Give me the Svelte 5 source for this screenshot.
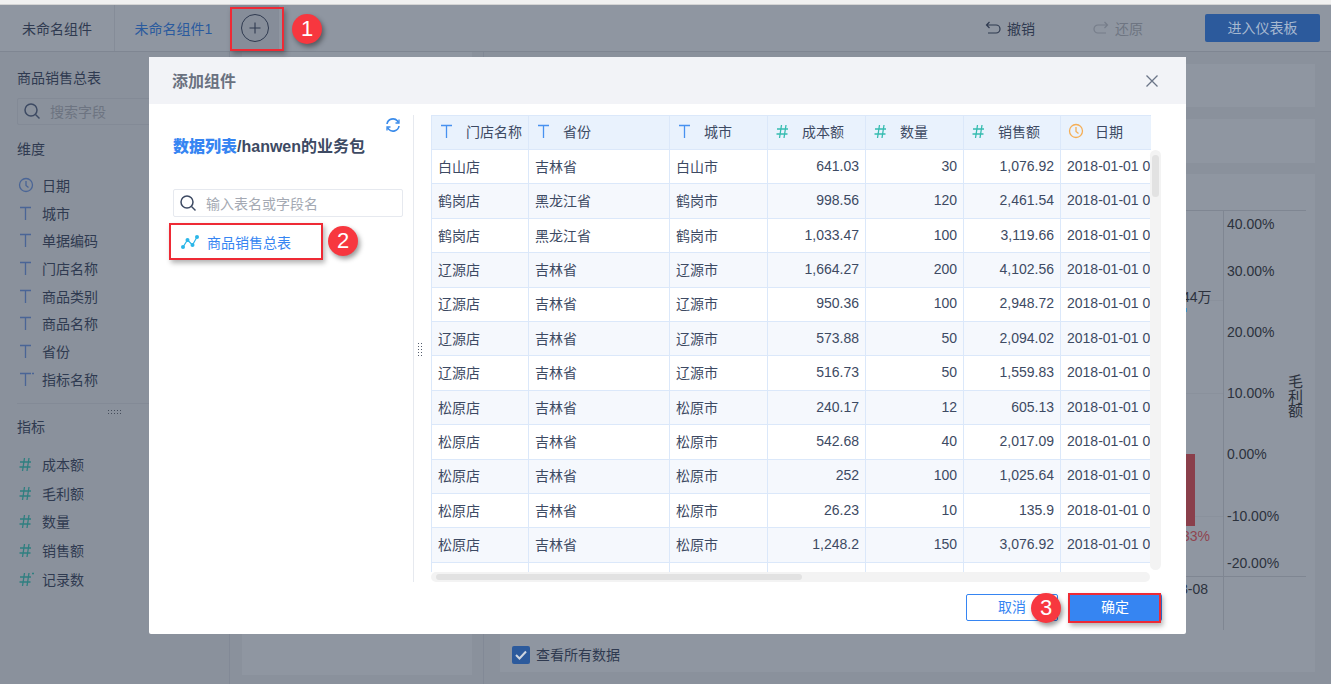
<script>
  const cols = [
    { label: '门店名称', icon: 'T', w: 97 },
    { label: '省份', icon: 'T', w: 141 },
    { label: '城市', icon: 'T', w: 98 },
    { label: '成本额', icon: 'H', w: 98 },
    { label: '数量', icon: 'H', w: 98 },
    { label: '销售额', icon: 'H', w: 97 },
    { label: '日期', icon: 'C', w: 90 }
  ];
  const d = '2018-01-01 00:00:00';
  const rows = [
    ['白山店','吉林省','白山市','641.03','30','1,076.92',d],
    ['鹤岗店','黑龙江省','鹤岗市','998.56','120','2,461.54',d],
    ['鹤岗店','黑龙江省','鹤岗市','1,033.47','100','3,119.66',d],
    ['辽源店','吉林省','辽源市','1,664.27','200','4,102.56',d],
    ['辽源店','吉林省','辽源市','950.36','100','2,948.72',d],
    ['辽源店','吉林省','辽源市','573.88','50','2,094.02',d],
    ['辽源店','吉林省','辽源市','516.73','50','1,559.83',d],
    ['松原店','吉林省','松原市','240.17','12','605.13',d],
    ['松原店','吉林省','松原市','542.68','40','2,017.09',d],
    ['松原店','吉林省','松原市','252','100','1,025.64',d],
    ['松原店','吉林省','松原市','26.23','10','135.9',d],
    ['松原店','吉林省','松原市','1,248.2','150','3,076.92',d],
    ['','','','','','','']
  ];
  const dims = [['C','日期'],['T','城市'],['T','单据编码'],['T','门店名称'],['T','商品类别'],['T','商品名称'],['T','省份'],['TS','指标名称']];
  const metrics = [['H','成本额'],['H','毛利额'],['H','数量'],['H','销售额'],['HS','记录数']];
  const ticks = [['40.00%',42],['30.00%',89],['20.00%',150],['10.00%',211],['0.00%',272],['-10.00%',334],['-20.00%',381]];
  const grid = [126, 219, 342];
</script>

{#snippet glyph(kind, color)}
  <svg class="glyph" width="18" height="18" viewBox="0 0 18 18" fill="none" stroke={color} stroke-width="1.3">
    {#if kind === 'T' || kind === 'TS'}
      <path d="M3 3.500h11M8.500 3.500V16" />
      {#if kind === 'TS'}<path d="M16 2.500v2M15 3.500h2" stroke-width="1" />{/if}
    {:else if kind === 'H' || kind === 'HS'}
      <path d="M3 7h11M2.500 12h11M7.500 3 5.500 16M12 3l-2 13" />
      {#if kind === 'HS'}<path d="M16 2.500v2M15 3.500h2" stroke-width="1" />{/if}
    {:else}
      <circle cx="9" cy="9" r="6.500" /><path d="M9 5v4.500l2.500 2" />
    {/if}
  </svg>
{/snippet}

{#snippet search()}
  <svg class="glyph" width="18" height="18" viewBox="0 0 18 18" fill="none" stroke="#3d4a63" stroke-width="1.500">
    <circle cx="8" cy="8" r="6" /><path d="m12.500 12.500 4 4" />
  </svg>
{/snippet}

<div class="page">
  <div class="strip"></div>
  <header class="top">
    <div class="tab first">未命名组件</div>
    <div class="tab second">未命名组件1</div>
    <div class="addcell">
      <span class="plus"><svg width="14" height="14" viewBox="0 0 14 14" stroke="#2f3a50" stroke-width="1.100"><path d="M7 1.500v11M1.500 7h11" /></svg></span>
    </div>
    <div class="actions">
      <span class="action undo">
        <svg width="16" height="16" viewBox="0 0 16 16" fill="none" stroke="#2f3a50" stroke-width="1.200"><path d="M4.500 2 1.500 5l3 3M1.500 5H11a3.500 3.500 0 0 1 0 8H3" /></svg>
        撤销
      </span>
      <span class="action redo">
        <svg width="16" height="16" viewBox="0 0 16 16" fill="none" stroke="#767d8a" stroke-width="1.200"><path d="M11.500 2l3 3-3 3M14.500 5H5a3.500 3.500 0 0 0 0 8h8" /></svg>
        还原
      </span>
      <span class="enter">进入仪表板</span>
    </div>
  </header>

  <div class="body">
    <aside class="side">
      <div class="side-title">商品销售总表</div>
      <div class="side-search">{@render search()}<span>搜索字段</span></div>
      <div class="group-title">维度</div>
      <ul class="fields dims">
        {#each dims as [k, n]}
          <li>{@render glyph(k, '#4a6596')}<span>{n}</span></li>
        {/each}
      </ul>
      <div class="sep"><i></i></div>
      <div class="group-title metric">指标</div>
      <ul class="fields measures">
        {#each metrics as [k, n]}
          <li>{@render glyph(k, '#2f7f80')}<span>{n}</span></li>
        {/each}
      </ul>
    </aside>
    <section class="mid"><div class="midpanel"></div></section>
    <section class="main">
      <div class="band b1"></div>
      <div class="band b2"></div>
      <div class="chart">
        <i class="rule r-top"></i>
        <i class="rule r-bottom"></i>
        <i class="rule r-axis"></i>
        {#each grid as y}<i class="gridline" style:top="{y}px"></i>{/each}
        <span class="lbl val">44万</span>
        <i class="dot"></i>
        <i class="bar"></i>
        <span class="lbl pct">33%</span>
        <span class="lbl date">3-08</span>
        {#each ticks as [t, y]}<span class="lbl tick" style:top="{y}px">{t}</span>{/each}
        <div class="axis-name">毛<br />利<br />额</div>
      </div>
      <label class="all"><span class="check"><svg width="18" height="18" viewBox="0 0 18 18" fill="none" stroke="#cfd6e0" stroke-width="2"><path d="m4 9 3.500 3.500L14 5.500" /></svg></span><span class="all-text">查看所有数据</span></label>
    </section>
  </div>

  <div class="modal">
    <div class="m-head">
      <span class="m-title">添加组件</span>
      <svg width="14" height="14" viewBox="0 0 14 14" stroke="#6b7588" stroke-width="1.300"><path d="m1.500 1.500 11 11M12.500 1.500l-11 11" /></svg>
    </div>
    <div class="m-body">
      <div class="m-left">
        <svg class="refresh" width="16" height="16" viewBox="0 0 16 16" fill="none" stroke="#3a8bea" stroke-width="1.600">
          <path d="M2 7a6 6 0 0 1 10.500-3l1 1.500M14 9a6 6 0 0 1-10.500 3l-1-1.500" />
          <path d="M14 2.500V6h-3.500M2 13.500V10h3.500" stroke-width="1.300" />
        </svg>
        <div class="crumb"><b>数据列表</b>/hanwen的业务包</div>
        <div class="m-search">{@render search()}<span>输入表名或字段名</span></div>
        <div class="tree-item">
          <svg width="20" height="16" viewBox="0 0 20 16" fill="none" stroke="#2bb6e8" stroke-width="1.200">
            <path d="M3 13 7.500 6l5 5L17 3" />
            <g fill="#2bb6e8" stroke="none"><circle cx="3" cy="13" r="2" /><circle cx="7.500" cy="6" r="2" /><circle cx="12.500" cy="11" r="2" /><circle cx="17" cy="3" r="2" /></g>
          </svg>
          商品销售总表
        </div>
      </div>
      <div class="grip"><i></i></div>
      <div class="m-right">
        <div class="table-scroll">
          <table>
            <colgroup>{#each cols as c}<col style:width="{c.w}px" />{/each}</colgroup>
            <thead>
              <tr>
                {#each cols as c}
                  <th>
                    <span class="th">{@render glyph(c.icon, c.icon === 'T' ? '#4791f0' : c.icon === 'H' ? '#35bcb0' : '#f5ae55')}<span>{c.label}</span></span>
                  </th>
                {/each}
              </tr>
            </thead>
            <tbody>
              {#each rows as r}
                <tr>
                  {#each r as v, i}
                    <td class:num={i >= 3 && i <= 5}>{v}</td>
                  {/each}
                </tr>
              {/each}
            </tbody>
          </table>
          <div class="vtrack"><i></i></div>
        </div>
        <div class="htrack"><i></i></div>
      </div>
    </div>
    <div class="m-foot">
      <button class="cancel">取消</button>
      <button class="ok">确定</button>
    </div>
  </div>

  <div class="mark box1"></div>
  <div class="mark box2"></div>
  <div class="mark box3"></div>
  <span class="badge n1">1</span>
  <span class="badge n2">2</span>
  <span class="badge n3">3</span>
</div>

<style>
  :global(body) { margin: 0; background: #8a919c; }
  * { box-sizing: border-box; }
  .page {
    position: relative; width: 1331px; height: 684px; overflow: hidden;
    background: #8a919c; color: #2f3a50; display: flex; flex-direction: column;
    font-family: "Liberation Sans", "Noto Sans CJK SC", sans-serif; font-size: 14px;
  }
  .strip { height: 5px; background: #f0f0f0; border-bottom: 1px solid #d4d4d4; flex: none; }
  .top { height: 47px; flex: none; display: flex; align-items: center; background: #8f96a1; border-bottom: 1px solid #7f8692; }
  .tab { height: 46px; display: flex; align-items: center; justify-content: center; padding-bottom: 1px; }
  .first { width: 115px; border-right: 1px solid #858c98; }
  .second { width: 115px; color: #2a5a9e; padding-left: 2px; }
  .addcell { width: 49px; height: 46px; background: #868d99; border-right: 1px solid #858c98; display: flex; align-items: center; justify-content: center; padding-left: 2px; }
  .plus { width: 28px; height: 28px; border: 1px solid #2f3a50; border-radius: 50%; display: flex; align-items: center; justify-content: center; }
  .actions { margin-left: auto; display: flex; align-items: center; padding-right: 11px; }
  .action { display: flex; align-items: center; gap: 6px; padding-bottom: 1px; }
  .undo { margin-right: 58px; }
  .redo { color: #6e7582; margin-right: 62px; }
  .enter { width: 115px; height: 28px; background: #2c5a9c; color: #a6b8d0; border-radius: 2px; display: flex; align-items: center; justify-content: center; padding-bottom: 2px; }

  .body { flex: 1; display: flex; min-height: 0; }
  .side { width: 230px; flex: none; border-right: 1px solid #828996; padding: 17px 0 0 17px; }
  .side-title { line-height: 18px; }
  .side-search { margin-top: 11px; height: 27px; border: 1px solid #838a96; border-radius: 2px; display: flex; align-items: center; gap: 9px; padding: 0 0 1px 5px; color: #6d7481; }
  .group-title { margin-top: 15px; line-height: 18px; }
  .group-title.metric { margin-top: 0; }
  .fields { list-style: none; margin: 13px 0 0; padding: 0; }
  .fields li { height: 27.700px; display: flex; align-items: center; gap: 7px; }
  .measures { margin-top: 14px; }
  .measures li { height: 28.700px; }
  .sep { height: 15px; margin-top: 10px; border-top: 1px solid #838a96; position: relative; }
  .sep i { display: block; position: absolute; left: 90px; top: 5px; width: 15px; height: 6px; background: radial-gradient(circle, #444c5a 1px, transparent 1px) 0 0 / 3px 3px; }

  .mid { width: 254px; flex: none; padding: 0 11px 9px 12px; border-right: 1px solid #828996; }
  .midpanel { height: 100%; background: #8f96a1; }
  .main { flex: 1; padding: 12px 16px 12px 16px; display: flex; flex-direction: column; min-width: 0; }
  .band { height: 43px; background: #8f96a1; margin-bottom: 12px; flex: none; }
  .band.b2 { margin-bottom: 11px; height: 44px; }
  .chart { flex: 1; background: #8f96a1; position: relative; min-height: 0; }
  .rule { position: absolute; background: #7f8692; display: block; }
  .r-top { left: 0; width: 806px; top: 36px; height: 1px; }
  .r-bottom { left: 0; width: 806px; top: 402px; height: 1px; }
  .r-axis { left: 723px; top: 36px; width: 1px; height: 420px; }
  .gridline { position: absolute; left: 680px; width: 43px; height: 1px; background: #8a919c; display: block; }
  .lbl { position: absolute; line-height: 16px; color: #2c323d; white-space: nowrap; }
  .val { left: 682px; top: 115px; }
  .dot { position: absolute; left: 685px; top: 134px; width: 2px; height: 4px; background: #3b8fc0; display: block; }
  .bar { position: absolute; left: 680px; top: 280px; width: 15px; height: 72px; background: #8a3f4b; display: block; }
  .pct { left: 682px; top: 354px; color: #8f4550; }
  .date { left: 680px; top: 407px; }
  .tick { left: 727px; }
  .axis-name { position: absolute; left: 788px; top: 201px; font-size: 15px; line-height: 14.500px; color: #2c323d; }
  .all { height: 34px; background: #8f96a1; display: flex; align-items: center; padding-left: 12px; gap: 6px; flex: none; }
  .all-text { margin-top: -2px; }
  .check { width: 18px; height: 18px; background: #2c5a9c; border-radius: 2px; display: block; }
  .check svg { display: block; }

  .modal { position: absolute; left: 149px; top: 57px; width: 1037px; height: 577px; background: #fff; border-radius: 2px; display: flex; flex-direction: column; color: #3d4a63; }
  .m-head { height: 47px; flex: none; background: #f2f3f7; display: flex; align-items: center; justify-content: space-between; padding: 0 27px 0 23px; font-size: 16px; font-weight: 700; color: #6a7180; }
  .m-title { margin-top: -2px; }
  .m-body { height: 467px; margin-top: 11px; flex: none; display: flex; }
  .m-left { width: 265px; flex: none; border-right: 1px solid #e6e9ef; position: relative; padding-left: 24px; }
  .refresh { position: absolute; left: 236px; top: 2px; }
  .crumb { margin-top: 21px; font-size: 16px; font-weight: 700; line-height: 22px; white-space: nowrap; color: #3d4a63; }
  .crumb b { color: #3685f2; }
  .m-search { margin-top: 31px; width: 230px; height: 28px; border: 1px solid #e6e9ef; border-radius: 2px; display: flex; align-items: center; gap: 9px; padding: 0 0 1px 5px; color: #a4a9b3; }
  .tree-item { margin-top: 11px; width: 150px; height: 28px; display: flex; align-items: center; gap: 7px; padding-left: 7px; color: #3685f2; }
  .grip { width: 17px; flex: none; position: relative; }
  .grip i { position: absolute; left: 3px; top: 227px; width: 6px; height: 15px; background: radial-gradient(circle, #555e6e 1px, transparent 1px) 0 0 / 3px 3px; }
  .m-right { width: 730px; flex: none; }
  .table-scroll { height: 457px; position: relative; overflow: hidden; }
  table { table-layout: fixed; border-collapse: collapse; width: 719px; font-size: 14px; }
  thead tr { height: 34px; background: #e9f2fd; }
  tbody tr { height: 34.420px; }
  tbody tr:nth-child(even) { background: #f5f8fd; }
  th, td { border: 1px solid #dbe8fa; padding: 0 6px 2px; white-space: nowrap; overflow: hidden; font-weight: 400; font-size: 14px; text-align: left; }
  th { padding-bottom: 3px; }
  td.num { text-align: right; }
  td:last-child { border-right: 0; padding-right: 0; }
  th:last-child { border-right: 0; }
  .th { display: flex; align-items: center; gap: 10px; }
  .glyph { flex: none; display: block; }
  .vtrack { position: absolute; left: 719px; top: 35px; width: 11px; height: 420px; background: #f3f3f3; border-radius: 6px; padding: 5px 2px; }
  .vtrack i { display: block; width: 7px; height: 42px; background: #e2e2e2; border-radius: 4px; }
  .htrack { width: 719px; height: 10px; background: #f3f3f3; border-radius: 5px; padding: 2px 5px; }
  .htrack i { display: block; width: 366px; height: 6px; background: #e2e2e2; border-radius: 3px; }
  .m-foot { flex: 1; display: flex; justify-content: flex-end; align-items: flex-start; gap: 10px; padding: 12px 24px 0 0; }
  button { font: inherit; border-radius: 2px; height: 27px; cursor: pointer; padding: 0 0 3px; }
  .cancel { width: 92px; background: #fff; border: 1px solid #3685f2; color: #3685f2; }
  .ok { width: 94px; background: #3685f2; border: 0; color: #fff; }

  .mark { position: absolute; border: 2px solid #ee2a35; box-shadow: 2px 3px 5px rgba(0,0,0,.3); }
  .box1 { left: 230px; top: 7px; width: 54px; height: 44px; }
  .box2 { left: 169px; top: 223px; width: 154px; height: 37px; }
  .box3 { left: 1068px; top: 593px; width: 93px; height: 30px; }
  .badge { position: absolute; width: 30px; height: 30px; border-radius: 50%; background: #f7373f; color: #fff; font-size: 22px; line-height: 30px; text-align: center; box-shadow: 2px 3px 5px rgba(0,0,0,.4); }
  .n1 { left: 292px; top: 14px; }
  .n2 { left: 328px; top: 226px; }
  .n3 { left: 1031px; top: 593px; }
</style>
